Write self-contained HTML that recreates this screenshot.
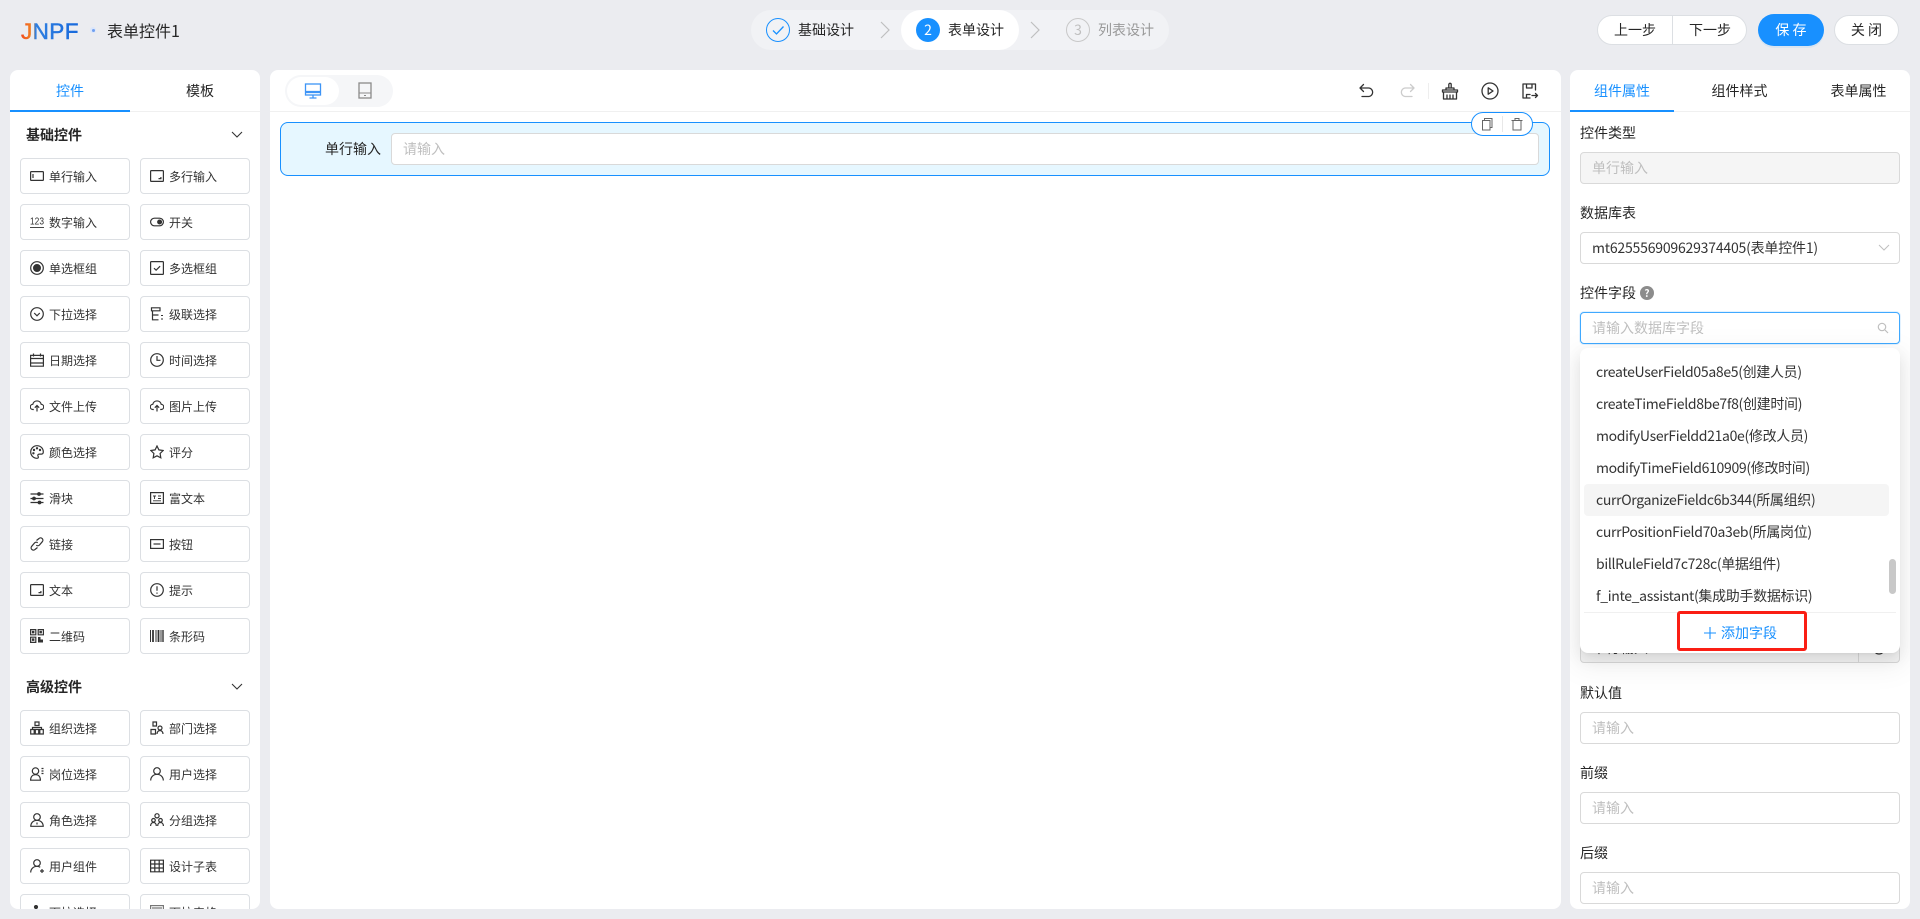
<!DOCTYPE html>
<html lang="zh"><head><meta charset="utf-8"><title>表单控件1</title>
<style>
*{box-sizing:border-box}
html,body{margin:0;padding:0;width:1920px;height:919px;overflow:hidden;background:#ebecf0;font:14px/20px "Noto Sans CJK SC","Liberation Sans",sans-serif;color:#262626}
.a{position:absolute;white-space:nowrap}
.panel{position:absolute;top:70px;height:839px;background:#fff;border-radius:8px;overflow:hidden}
.c{text-align:center}
.step{position:absolute;top:18px;width:24px;height:24px;border-radius:50%;text-align:center;line-height:22px;font-size:14px}
.tb{stroke:#333;stroke-width:1.3;fill:none;stroke-linecap:round;stroke-linejoin:round}
.w{position:absolute;left:10px;width:110px;height:36px;border:1px solid #dcdfe3;border-radius:4px;background:#fff;font-size:12px;line-height:35px;padding-left:28px;color:#333;white-space:nowrap}
.w.r{left:130px}
.w svg{position:absolute;left:9px;top:10px;width:14px;height:14px;fill:none;stroke:#333;stroke-width:1.2}
.title{position:absolute;left:16px;font-weight:700;font-size:14px;line-height:20px;color:#262626}
.lab{position:absolute;left:10px;font-size:14px;line-height:20px;color:#262626;white-space:nowrap}
.ipt{position:absolute;left:10px;width:320px;height:32px;border:1px solid #d9d9d9;border-radius:4px;background:#fff;line-height:30px;padding-left:11px;color:#bfbfbf;white-space:nowrap}
.opt{position:absolute;left:16px;height:32px;line-height:32px;color:#333;white-space:nowrap;letter-spacing:-.32px}
</style></head><body>
<svg width="0" height="0" style="position:absolute"><defs>
<symbol id="input" viewBox="0 0 14 14"><rect x=".6" y="2.6" width="12.8" height="8.8" rx=".8"/><path d="M3 5v4"/></symbol>
<symbol id="area" viewBox="0 0 14 14"><rect x=".6" y="1.6" width="12.8" height="10.8" rx=".8"/><path d="M8.5 9.6h2.4V8"/></symbol>
<symbol id="switch" viewBox="0 0 14 14"><rect x=".6" y="3.2" width="12.8" height="7.6" rx="3.8"/><circle cx="9.6" cy="7" r="1.9" fill="#333"/></symbol>
<symbol id="radio" viewBox="0 0 14 14"><circle cx="7" cy="7" r="6.3"/><circle cx="7" cy="7" r="3.4" fill="#333"/></symbol>
<symbol id="check" viewBox="0 0 14 14"><rect x=".6" y=".6" width="12.8" height="12.8" rx=".8"/><path d="M4 7.2l2.1 2 4-4"/></symbol>
<symbol id="select" viewBox="0 0 14 14"><circle cx="7" cy="7" r="6.3"/><path d="M4.2 6l2.8 2.8L9.800 6"/></symbol>
<symbol id="casc" viewBox="0 0 14 14"><path d="M1.500.8h8.500v3H1.500zM2.500 3.800v9h6M2.500 8h6"/><path d="M12 8v1M12 11.500v1" stroke-width="2"/></symbol>
<symbol id="date" viewBox="0 0 14 14"><path d="M.6 2.400h12.800v10.800H.6zM.6 5.500h12.800M.6 10h12.800M3.500.5v3M10.500.5v3"/></symbol>
<symbol id="time" viewBox="0 0 14 14"><circle cx="7" cy="7" r="6.300"/><path d="M7 3v4.300h3.500"/></symbol>
<symbol id="up" viewBox="0 0 14 14"><path d="M3.800 10.500H3A2.600 2.600 0 0 1 2.800 5.300 4.300 4.300 0 0 1 11.200 5.300 2.600 2.600 0 0 1 11 10.500h-.8M7 12.500V6.500M4.800 8.700L7 6.500l2.200 2.200"/></symbol>
<symbol id="color" viewBox="0 0 14 14"><path d="M7 .7a6.300 6.300 0 1 0 0 12.600c1.600 0 1.600-1.300 1-2.200-.6-1 .1-2 1.200-2h2.200c1.300 0 1.900-1 1.900-2.200C13.300 3.300 10.500.7 7 .7z"/><circle cx="4" cy="5" r=".6" fill="#333"/><circle cx="7" cy="3.300" r=".6" fill="#333"/><circle cx="10" cy="5" r=".6" fill="#333"/><circle cx="3.400" cy="8.300" r=".6" fill="#333"/></symbol>
<symbol id="star" viewBox="0 0 14 14"><path d="M7 1l1.900 3.900 4.300.6-3.100 3 .7 4.300L7 10.800 3.200 12.800l.7-4.300-3.100-3 4.300-.6z"/></symbol>
<symbol id="slider" viewBox="0 0 14 14"><path d="M.5 3h13M.5 7.500h13M.5 11.500h13"/><circle cx="9" cy="3" r="1.300" fill="#333"/><circle cx="4" cy="7.500" r="1.300" fill="#333"/><circle cx="9.500" cy="11.500" r="1.300" fill="#333"/></symbol>
<symbol id="rich" viewBox="0 0 14 14"><rect x=".6" y="1.600" width="12.800" height="10.800"/><path d="M3 5h3M4.500 5v3M8 5h3M8 7.500h3M3 9.800h8" stroke-width=".9"/></symbol>
<symbol id="link" viewBox="0 0 14 14"><path d="M6.500 3.500L9 1.500a2.300 2.300 0 0 1 3.300 3.200L9.500 8a2.300 2.300 0 0 1-3.200.2M7.500 10.500L5 12.500a2.300 2.300 0 0 1-3.300-3.200L4.500 6a2.300 2.300 0 0 1 3.200-.2"/></symbol>
<symbol id="btn" viewBox="0 0 14 14"><rect x=".6" y="2.600" width="12.800" height="8.800"/><path d="M3.500 7h7"/></symbol>
<symbol id="tip" viewBox="0 0 14 14"><circle cx="7" cy="7" r="6.300"/><path d="M7 3.300v4.500M7 9.500v1.200"/></symbol>
<symbol id="qr" viewBox="0 0 14 14"><path d="M.6.600h5.200v5.200H.6zM8.200.6h5.200v5.200H8.200zM.6 8.200h5.200v5.200H.6z"/><path d="M2.500 2.500h1.300v1.300H2.500zM10 2.500h1.300v1.300H10zM2.500 10h1.300v1.300H2.500z" fill="#333"/><path d="M8 8h2.500v2.500H13V13.500H8z" fill="#333" stroke="none"/></symbol>
<symbol id="bar" viewBox="0 0 14 14"><path d="M.5 1v12" stroke-width="1"/><path d="M3 1v12" stroke-width="1.800"/><path d="M6 1v12" stroke-width="1"/><path d="M8.500 1v12" stroke-width="1.800"/><path d="M11 1v12" stroke-width="1"/><path d="M13 1v12" stroke-width="1.400"/></symbol>
<symbol id="org" viewBox="0 0 14 14"><path d="M5 1h4v3.500H5zM.7 8.500h3.500v4.500H.7zM5.300 8.500h3.400v4.500H5.300zM9.800 8.500h3.500v4.500H9.800zM2.500 8.500V6.500h9v2"/></symbol>
<symbol id="dept" viewBox="0 0 14 14"><path d="M3 1h3.500v4H3zM1 8.500h4.500v4.500H1z"/><circle cx="10" cy="7" r="2"/><path d="M7 13c0-2 1.300-3.500 3-3.500S13 11 13 13"/></symbol>
<symbol id="pos" viewBox="0 0 14 14"><circle cx="5.500" cy="4" r="3.200"/><path d="M.6 13.200c0-3.500 2-5.500 5-5.500s4.800 2 4.800 5.500zM11.500 1.500h2M11.500 4h2M11.500 6.500h2"/></symbol>
<symbol id="user" viewBox="0 0 14 14"><circle cx="7" cy="4" r="3.300"/><path d="M.7 13.500c0-3.600 2.800-6.200 6.300-6.200s6.300 2.600 6.300 6.200"/></symbol>
<symbol id="role" viewBox="0 0 14 14"><circle cx="7" cy="4" r="3.300"/><path d="M.8 13.300C.8 9.800 3.500 7.300 7 7.300s6.200 2.500 6.200 6zM7 9.500v2"/></symbol>
<symbol id="grp" viewBox="0 0 14 14"><circle cx="7" cy="2.800" r="2.100"/><circle cx="3.500" cy="7.300" r="1.800"/><circle cx="10.500" cy="7.300" r="1.800"/><path d="M.6 13c0-2 1.200-3.500 2.900-3.500S6.300 11 6.300 13M7.700 13c0-2 1.100-3.500 2.800-3.500s2.900 1.500 2.900 3.500"/></symbol>
<symbol id="uadd" viewBox="0 0 14 14"><circle cx="7" cy="4" r="3.300"/><path d="M.7 13.500c0-3.600 2.800-6.200 6.300-6.200 1.200 0 2.300.3 3.200.9M10 12h4M12 10v4"/></symbol>
<symbol id="table" viewBox="0 0 14 14"><path d="M.6 1.200h12.800v11.600H.6zM.6 5h12.800M.6 9h12.800M4.800 1.200v11.600M9.200 1.200v11.600"/></symbol>
<symbol id="pin" viewBox="0 0 14 14"><circle cx="6" cy="2" r="1.500" fill="#333"/></symbol>
<symbol id="box" viewBox="0 0 14 14"><rect x=".6" y=".6" width="12.800" height="12.800" stroke="#777"/><rect x="2" y="2" width="10" height="3" fill="#aaa" stroke="none"/></symbol>
<linearGradient id="lg" gradientUnits="userSpaceOnUse" x1="0" y1="0" x2="60" y2="0"><stop offset="0" stop-color="#f24a1d"/><stop offset=".2" stop-color="#f08a24"/><stop offset=".24" stop-color="#2f7fe0"/><stop offset="1" stop-color="#1668dc"/></linearGradient>
</defs></svg>

<!-- header -->
<svg class="a" style="left:21px;top:18px" width="62" height="26"><text x="0" y="21" font-family="Liberation Sans" font-size="22.500" fill="url(#lg)" stroke="url(#lg)" stroke-width=".5" letter-spacing=".4">JNPF</text></svg>
<div class="a" style="left:90px;top:27px;width:6px;height:6px;border-radius:50%;background:#dbe6fb"></div>
<div class="a" style="left:91.500px;top:28.500px;width:3px;height:3px;border-radius:50%;background:#6f9ff0"></div>
<div class="a" style="left:107px;top:19px;font-size:16px;line-height:22px;color:#262626">表单控件1</div>

<div class="a" style="left:751px;top:10px;width:418px;height:40px;border-radius:20px;background:#f1f2f5"></div>
<div class="a" style="left:901px;top:10px;width:118px;height:40px;border-radius:20px;background:#fff"></div>
<div class="step" style="left:766px;border:1px solid #1890ff"><svg width="22" height="22" style="display:block"><path d="M6 11.500l3.500 3.500 7-7.500" fill="none" stroke="#1890ff" stroke-width="1.300"/></svg></div>
<div class="a" style="left:798px;top:20px;color:#262626">基础设计</div>
<svg class="a" style="left:878px;top:20px" width="14" height="20"><path d="M3 2l8 8-8 8" fill="none" stroke="#bfbfbf" stroke-width="1.200"/></svg>
<div class="step" style="left:916px;background:#1890ff;color:#fff;line-height:24px">2</div>
<div class="a" style="left:948px;top:20px;color:#262626">表单设计</div>
<svg class="a" style="left:1028px;top:20px" width="14" height="20"><path d="M3 2l8 8-8 8" fill="none" stroke="#bfbfbf" stroke-width="1.200"/></svg>
<div class="step" style="left:1066px;border:1px solid #c8c8c8;color:#bfbfbf">3</div>
<div class="a" style="left:1098px;top:20px;color:#999">列表设计</div>

<div class="a" style="left:1597px;top:15px;width:150px;height:30px;border-radius:15px;background:#fff;border:1px solid #dcdfe3"></div>
<div class="a" style="left:1672px;top:15px;width:1px;height:30px;background:#dcdfe3"></div>
<div class="a c" style="left:1598px;top:20px;width:74px">上一步</div>
<div class="a c" style="left:1673px;top:20px;width:74px">下一步</div>
<div class="a c" style="left:1758px;top:14px;width:66px;height:32px;border-radius:16px;background:#1890ff;color:#fff;line-height:32px;box-shadow:0 2px 0 rgba(5,145,255,.08)">保 存</div>
<div class="a c" style="left:1834px;top:15px;width:65px;height:30px;border-radius:15px;background:#fff;border:1px solid #dcdfe3;line-height:28px">关 闭</div>

<!-- left panel -->
<div class="panel" style="left:10px;width:250px">
 <div class="a c" style="left:0;top:11px;width:120px;color:#1890ff">控件</div>
 <div class="a c" style="left:130px;top:11px;width:120px">模板</div>
 <div class="a" style="left:0;top:41px;width:250px;height:1px;background:#f0f0f0"></div>
 <div class="a" style="left:0;top:40px;width:120px;height:2px;background:#1890ff"></div>
 <div class="title" style="top:55px">基础控件</div>
 <svg class="a" style="left:221px;top:59px" width="12" height="12"><path d="M1 3l5 5 5-5" fill="none" stroke="#333" stroke-width="1.100"/></svg>

 <div class="w" style="top:88px"><svg><use href="#input"/></svg>单行输入</div><div class="w r" style="top:88px"><svg><use href="#area"/></svg>多行输入</div>
 <div class="w" style="top:134px"><svg viewBox="0 0 14 14"><text x="0" y="9.500" font-family="Liberation Sans" font-size="10" fill="#333" stroke="none" textLength="14" lengthAdjust="spacingAndGlyphs">123</text><path d="M0 12.500h14" stroke-width=".9"/></svg>数字输入</div><div class="w r" style="top:134px"><svg><use href="#switch"/></svg>开关</div>
 <div class="w" style="top:180px"><svg><use href="#radio"/></svg>单选框组</div><div class="w r" style="top:180px"><svg><use href="#check"/></svg>多选框组</div>
 <div class="w" style="top:226px"><svg><use href="#select"/></svg>下拉选择</div><div class="w r" style="top:226px"><svg><use href="#casc"/></svg>级联选择</div>
 <div class="w" style="top:272px"><svg><use href="#date"/></svg>日期选择</div><div class="w r" style="top:272px"><svg><use href="#time"/></svg>时间选择</div>
 <div class="w" style="top:318px"><svg><use href="#up"/></svg>文件上传</div><div class="w r" style="top:318px"><svg><use href="#up"/></svg>图片上传</div>
 <div class="w" style="top:364px"><svg><use href="#color"/></svg>颜色选择</div><div class="w r" style="top:364px"><svg><use href="#star"/></svg>评分</div>
 <div class="w" style="top:410px"><svg><use href="#slider"/></svg>滑块</div><div class="w r" style="top:410px"><svg><use href="#rich"/></svg>富文本</div>
 <div class="w" style="top:456px"><svg><use href="#link"/></svg>链接</div><div class="w r" style="top:456px"><svg><use href="#btn"/></svg>按钮</div>
 <div class="w" style="top:502px"><svg><use href="#area"/></svg>文本</div><div class="w r" style="top:502px"><svg><use href="#tip"/></svg>提示</div>
 <div class="w" style="top:548px"><svg><use href="#qr"/></svg>二维码</div><div class="w r" style="top:548px"><svg><use href="#bar"/></svg>条形码</div>

 <div class="title" style="top:607px">高级控件</div>
 <svg class="a" style="left:221px;top:611px" width="12" height="12"><path d="M1 3l5 5 5-5" fill="none" stroke="#333" stroke-width="1.100"/></svg>

 <div class="w" style="top:640px"><svg><use href="#org"/></svg>组织选择</div><div class="w r" style="top:640px"><svg><use href="#dept"/></svg>部门选择</div>
 <div class="w" style="top:686px"><svg><use href="#pos"/></svg>岗位选择</div><div class="w r" style="top:686px"><svg><use href="#user"/></svg>用户选择</div>
 <div class="w" style="top:732px"><svg><use href="#role"/></svg>角色选择</div><div class="w r" style="top:732px"><svg><use href="#grp"/></svg>分组选择</div>
 <div class="w" style="top:778px"><svg><use href="#uadd"/></svg>用户组件</div><div class="w r" style="top:778px"><svg><use href="#table"/></svg>设计子表</div>
 <div class="w" style="top:824px"><svg><use href="#pin"/></svg>下拉选择</div><div class="w r" style="top:824px"><svg><use href="#box"/></svg>下拉表格</div>
</div>

<!-- center panel -->
<div class="panel" style="left:270px;width:1291px">
 <div class="a" style="left:0;top:41px;width:1291px;height:1px;background:#f0f0f0"></div>
 <div class="a" style="left:15px;top:5px;width:108px;height:32px;border-radius:16px;background:#f5f6f8"></div>
 <div class="a" style="left:17px;top:7px;width:52px;height:28px;border-radius:14px;background:#fff"></div>
 <svg class="a" style="left:34px;top:12px" width="18" height="18"><rect x="1.500" y="2" width="15" height="11" fill="none" stroke="#3d94f6" stroke-width="1.300"/><path d="M1.500 10h15" stroke="#3d94f6" stroke-width="2.200"/><path d="M9 13v2.500M5.500 16h7" stroke="#3d94f6" stroke-width="1.300"/></svg>
 <svg class="a" style="left:88px;top:11px" width="14" height="20"><rect x="1" y="2" width="12" height="15" fill="none" stroke="#8a8a8a" stroke-width="1.300"/><path d="M1 12h12" stroke="#8a8a8a"/><path d="M6 14.500h2" stroke="#8a8a8a"/></svg>

 <svg class="a" style="left:1088px;top:12px" width="18" height="18"><path class="tb" d="M5.500 2.500L2 6l3.500 3.500M2.500 6H11a4.300 4.300 0 0 1 0 8.500H4"/></svg>
 <svg class="a" style="left:1128px;top:12px" width="18" height="18"><path class="tb" style="stroke:#ccc" d="M12.500 2.500L16 6l-3.500 3.500M15.500 6H7a4.300 4.300 0 0 0 0 8.500h7"/></svg>
 <div class="a" style="left:1158px;top:13px;width:1px;height:16px;background:#eee"></div>
 <svg class="a" style="left:1171px;top:12px" width="18" height="18"><path class="tb" d="M7.800 6V2.500a1.200 1.200 0 0 1 2.400 0V6M5 8V6h8v2M1.500 8h15v2h-15zM2.500 10v7h13v-7M6 13v4M9 13v4M12 13v4"/></svg>
 <svg class="a" style="left:1211px;top:12px" width="18" height="18"><circle cx="9" cy="9" r="8" class="tb"/><path class="tb" d="M7.200 5.800v6.400l4.800-3.200z"/></svg>
 <svg class="a" style="left:1251px;top:12px" width="18" height="18"><path class="tb" d="M14.500 8V2H2v14h7M5.500 2v4h5.500V2M5.500 16v-3.500H9M11 13.500H16.500M14.500 11.500l2 2-2 2"/></svg>

 <div class="a" style="left:10px;top:52px;width:1270px;height:54px;background:#e6f7ff;border:1px solid #1890ff;border-radius:8px"></div>
 <div class="a" style="left:55px;top:69px;width:56px">单行输入</div>
 <div class="ipt" style="left:121px;top:63px;width:1148px">请输入</div>
 <div class="a" style="left:1201px;top:42px;width:62px;height:24px;background:#fff;border:1px solid #1890ff;border-radius:12px"></div>
 <svg class="a" style="left:1210px;top:47px" width="14" height="14"><path d="M4.500 3.500V1.500h7.500v9h-2M2.500 3.500h7.500v9.500H2.500z" fill="none" stroke="#666" stroke-width="1"/></svg>
 <div class="a" style="left:1232px;top:46px;width:1px;height:16px;background:#e8e8e8"></div>
 <svg class="a" style="left:1240px;top:47px" width="14" height="14"><path d="M1.500 3.500h11M5 3.500V1.500h4v2M3 3.500v9.500h8V3.500" fill="none" stroke="#666" stroke-width="1"/></svg>
</div>

<!-- right panel -->
<div class="panel" style="left:1570px;width:340px">
 <div class="a c" style="left:0;top:11px;width:104px;color:#1890ff">组件属性</div>
 <div class="a c" style="left:113px;top:11px;width:113px">组件样式</div>
 <div class="a c" style="left:232px;top:11px;width:113px">表单属性</div>
 <div class="a" style="left:0;top:41px;width:340px;height:1px;background:#f0f0f0"></div>
 <div class="a" style="left:0;top:40px;width:104px;height:2px;background:#1890ff"></div>

 <div class="lab" style="top:53px">控件类型</div>
 <div class="ipt" style="top:82px;background:#f5f5f5">单行输入</div>
 <div class="lab" style="top:133px">数据库表</div>
 <div class="ipt" style="top:162px;color:#333;letter-spacing:-.2px">mt625556909629374405(表单控件1)</div>
 <svg class="a" style="left:308px;top:173px" width="12" height="10"><path d="M1 2l5 5 5-5" fill="none" stroke="#bfbfbf" stroke-width="1"/></svg>
 <div class="lab" style="top:213px">控件字段</div>
 <div class="a c" style="left:70px;top:216px;width:14px;height:14px;border-radius:50%;background:#8c8c8c;color:#fff;font-size:10px;font-weight:700;line-height:14px">?</div>
 <div class="ipt" style="top:242px;border-color:#40a9ff;box-shadow:0 0 0 1px rgba(24,144,255,.12)">请输入数据库字段</div>
 <svg class="a" style="left:307px;top:252px" width="12" height="12"><circle cx="5" cy="5" r="3.700" fill="none" stroke="#bfbfbf" stroke-width="1.200"/><path d="M8 8l3 3" stroke="#bfbfbf" stroke-width="1.200"/></svg>

 <div class="ipt" style="top:561px;color:#333;background:#f5f5f5;line-height:33px">单行输入</div>
 <div class="a" style="left:288px;top:562px;width:1px;height:30px;background:#d9d9d9"></div>
 <svg class="a" style="left:302px;top:572px" width="14" height="14"><circle cx="7" cy="7" r="5" fill="none" stroke="#333" stroke-width="1.300"/><circle cx="7" cy="7" r="2" fill="#333"/></svg>

 <div class="lab" style="top:613px">默认值</div>
 <div class="ipt" style="top:642px">请输入</div>
 <div class="lab" style="top:693px">前缀</div>
 <div class="ipt" style="top:722px">请输入</div>
 <div class="lab" style="top:773px">后缀</div>
 <div class="ipt" style="top:802px">请输入</div>

 <div class="a" style="left:10px;top:278px;width:320px;height:305px;background:#fff;border-radius:8px;box-shadow:0 6px 16px rgba(0,0,0,.08),0 3px 6px -4px rgba(0,0,0,.12),0 9px 28px 8px rgba(0,0,0,.05)">
  <div class="a" style="left:4px;top:136px;width:305px;height:32px;background:#f5f5f5;border-radius:4px"></div>
  <div class="opt" style="top:8px">createUserField05a8e5(创建人员)</div>
  <div class="opt" style="top:40px">createTimeField8be7f8(创建时间)</div>
  <div class="opt" style="top:72px">modifyUserFieldd21a0e(修改人员)</div>
  <div class="opt" style="top:104px">modifyTimeField610909(修改时间)</div>
  <div class="opt" style="top:136px">currOrganizeFieldc6b344(所属组织)</div>
  <div class="opt" style="top:168px">currPositionField70a3eb(所属岗位)</div>
  <div class="opt" style="top:200px">billRuleField7c728c(单据组件)</div>
  <div class="opt" style="top:232px">f_inte_assistant(集成助手数据标识)</div>
  <div class="a" style="left:309px;top:211px;width:7px;height:35px;background:#c8c8c8;border-radius:4px"></div>
  <div class="a" style="left:4px;top:264px;width:312px;height:1px;background:#f0f0f0"></div>
  <svg class="a" style="left:123px;top:278px" width="14" height="14"><path d="M7 1v12M1 7h12" stroke="#1890ff" stroke-width="1.100"/></svg>
  <div class="a" style="left:141px;top:275px;color:#1890ff">添加字段</div>
  <div class="a" style="left:97px;top:263px;width:130px;height:40px;border:3px solid #fa1e14;border-radius:3px"></div>
 </div>
</div>
</body></html>
